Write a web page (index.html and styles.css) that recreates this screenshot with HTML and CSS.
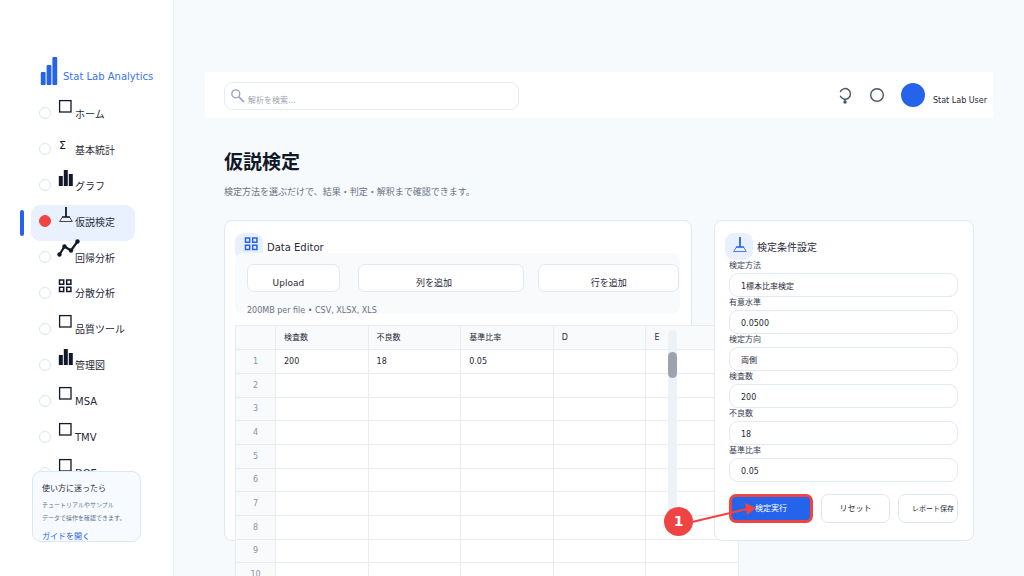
FILE: index.html
```html
<!DOCTYPE html>
<html lang="ja">
<head>
<meta charset="utf-8">
<meta name="viewport" content="width=device-width, initial-scale=1">
<title>Stat Lab Analytics</title>
<link rel="stylesheet" href="styles.css">
</head>
<body>
<svg class="sprite" aria-hidden="true">
  <symbol id="i-box" viewBox="0 0 16 16"><rect x="1.600" y="1.600" width="11.400" height="11.400" fill="none" stroke="currentColor" stroke-width="1.300"/></symbol>
  <symbol id="i-bars" viewBox="0 0 16 16"><path d="M0.800 6h4v10h-4zM5.800 0h4v16h-4zM10.800 4h4v12h-4z" fill="currentColor"/></symbol>
  <symbol id="i-test" viewBox="0 0 16 16"><path d="M8 0v10" stroke="currentColor" stroke-width="1.800" fill="none"/><path d="M4.500 10h7l2.800 4.500H1.600z" stroke="currentColor" stroke-width=".8" fill="none"/><path d="M4 10h8" stroke="currentColor" stroke-width="1.300"/></symbol>
  <symbol id="i-line" viewBox="0 0 24 18"><path d="M2.500 15.500 7.500 7.500 14 11.500 20.500 2.500" fill="none" stroke="currentColor" stroke-width="2.200"/><g fill="currentColor"><circle cx="2.500" cy="15.500" r="2.200"/><circle cx="7.500" cy="7.500" r="2.200"/><circle cx="14" cy="11.500" r="2.200"/><circle cx="20.500" cy="2.500" r="2.200"/></g></symbol>
  <symbol id="i-grid" viewBox="0 0 16 16"><path d="M1.500 1h4.200v4.200H1.500zM8.700 1h4.200v4.200H8.700zM1.500 8.200h4.200v4.200H1.500zM8.700 8.200h4.200v4.200H8.700z" fill="none" stroke="currentColor" stroke-width="1.500"/></symbol>
</svg>
<div class="app">
  <aside class="sidebar">
    <div class="brand">
      <svg class="brand-mark" viewBox="0 0 18 28" aria-hidden="true"><g fill="#2563eb"><rect x="0.800" y="15" width="4.800" height="13" rx="1"/><rect x="6.600" y="8" width="4.800" height="20" rx="1"/><rect x="12.400" y="0" width="4.800" height="28" rx="1"/></g></svg>
      <span>Stat Lab Analytics</span>
    </div>
    <nav class="nav">
      <label class="item"><input type="radio" name="nav"><svg class="ico"><use href="#i-box"/></svg><span>ホーム</span></label>
      <label class="item"><input type="radio" name="nav"><i class="ico sigma">Σ</i><span>基本統計</span></label>
      <label class="item"><input type="radio" name="nav"><svg class="ico bars"><use href="#i-bars"/></svg><span>グラフ</span></label>
      <label class="item active"><input type="radio" name="nav" checked><svg class="ico"><use href="#i-test"/></svg><span>仮説検定</span></label>
      <label class="item"><input type="radio" name="nav"><svg class="ico wide"><use href="#i-line"/></svg><span>回帰分析</span></label>
      <label class="item"><input type="radio" name="nav"><svg class="ico"><use href="#i-grid"/></svg><span>分散分析</span></label>
      <label class="item"><input type="radio" name="nav"><svg class="ico"><use href="#i-box"/></svg><span>品質ツール</span></label>
      <label class="item"><input type="radio" name="nav"><svg class="ico bars"><use href="#i-bars"/></svg><span>管理図</span></label>
      <label class="item"><input type="radio" name="nav"><svg class="ico"><use href="#i-box"/></svg><span>MSA</span></label>
      <label class="item"><input type="radio" name="nav"><svg class="ico"><use href="#i-box"/></svg><span>TMV</span></label>
      <label class="item"><input type="radio" name="nav"><svg class="ico"><use href="#i-box"/></svg><span>DOE</span></label>
    </nav>
    <section class="guide">
      <h2>使い方に迷ったら</h2>
      <p>チュートリアルやサンプル<br>データで操作を確認できます。</p>
      <a href="#guide">ガイドを開く</a>
    </section>
  </aside>

  <main class="main">
    <header class="topbar">
      <label class="search">
        <svg viewBox="0 0 14 14" aria-hidden="true"><circle cx="4.800" cy="4.800" r="4" fill="none" stroke="#94a3b8" stroke-width="1.300"/><path d="M7.800 7.800 13 13" stroke="#94a3b8" stroke-width="1.700"/></svg>
        <input type="search" placeholder="解析を検索..." aria-label="解析を検索">
      </label>
      <div class="tools">
        <button class="tool" aria-label="ヘルプ"><svg viewBox="0 0 16 18"><path d="M3.200 6A5.300 5.300 0 1 1 3.200 9.800" fill="none" stroke="#475569" stroke-width="1.400"/><path d="M8 13v2" stroke="#475569"/><circle cx="8" cy="16" r="1.700" fill="#475569"/></svg></button>
        <button class="tool" aria-label="通知"><svg viewBox="0 0 16 18"><circle cx="8" cy="9" r="6.300" fill="none" stroke="#475569" stroke-width="1.400"/></svg></button>
        <span class="avatar"></span>
        <span class="user">Stat Lab User</span>
      </div>
    </header>

    <div class="content">
      <h1>仮説検定</h1>
      <p class="lead">検定方法を選ぶだけで、結果・判定・解釈まで確認できます。</p>

      <div class="panels">
        <section class="panel editor">
          <div class="panel-head"><span class="tile"><svg><use href="#i-grid"/></svg></span><h2>Data Editor</h2></div>
          <div class="toolbar">
            <div class="toolbar-row">
              <button class="upload">Upload</button>
              <button class="column">列を追加</button>
              <button>行を追加</button>
            </div>
            <p>200MB per file • CSV, XLSX, XLS</p>
          </div>
          <div class="sheet">
            <table>
              <thead><tr><th class="num"></th><th>検査数</th><th>不良数</th><th>基準比率</th><th>D</th><th>E</th></tr></thead>
              <tbody>
                <tr><th class="num">1</th><td>200</td><td>18</td><td>0.05</td><td></td><td></td></tr>
                <tr><th class="num">2</th><td></td><td></td><td></td><td></td><td></td></tr>
                <tr><th class="num">3</th><td></td><td></td><td></td><td></td><td></td></tr>
                <tr><th class="num">4</th><td></td><td></td><td></td><td></td><td></td></tr>
                <tr><th class="num">5</th><td></td><td></td><td></td><td></td><td></td></tr>
                <tr><th class="num">6</th><td></td><td></td><td></td><td></td><td></td></tr>
                <tr><th class="num">7</th><td></td><td></td><td></td><td></td><td></td></tr>
                <tr><th class="num">8</th><td></td><td></td><td></td><td></td><td></td></tr>
                <tr><th class="num">9</th><td></td><td></td><td></td><td></td><td></td></tr>
                <tr><th class="num">10</th><td></td><td></td><td></td><td></td><td></td></tr>
              </tbody>
            </table>
            <div class="scrollbar"><span></span></div>
          </div>
        </section>

        <section class="panel settings">
          <div class="panel-head"><span class="tile"><svg><use href="#i-test"/></svg></span><h2>検定条件設定</h2></div>
          <form>
            <label for="method">検定方法</label>
            <select id="method"><option>1標本比率検定</option></select>
            <label for="alpha">有意水準</label>
            <input id="alpha" type="text" value="0.0500">
            <label for="side">検定方向</label>
            <select id="side"><option>両側</option></select>
            <label for="n">検査数</label>
            <input id="n" type="text" value="200">
            <label for="bad">不良数</label>
            <input id="bad" type="text" value="18">
            <label for="ratio">基準比率</label>
            <input id="ratio" type="text" value="0.05">
            <div class="actions">
              <button type="button" class="run">検定実行</button>
              <button type="button">リセット</button>
              <button type="button" class="report">レポート保存</button>
              <div class="callout">
                <svg viewBox="0 0 94 46" aria-hidden="true"><path d="M28 30 83 17" stroke="#ef4444" stroke-width="2"/><path d="M81 11 92 16 83 23z" fill="#ef4444"/></svg>
                <span>1</span>
              </div>
            </div>
          </form>
        </section>
      </div>
    </div>
  </main>
</div>
</body>
</html>
```
FILE: styles.css
```css
* { box-sizing: border-box; }

body {
  margin: 0;
  height: 100vh;
  overflow: hidden;
  background: #f6fafd;
  color: #1f2937;
  font-family: "DejaVu Sans", "Noto Sans CJK JP", sans-serif;
  font-size: 8px;
}

h1, h2, p { margin: 0; font-weight: 400; }
button, input, select { font: inherit; color: inherit; }
.sprite { position: absolute; width: 0; height: 0; }

.app { display: flex; height: 100vh; }

/* Sidebar */
.sidebar {
  position: relative;
  flex: none;
  width: 174px;
  padding: 57px 0 0 31px;
  background: #fff;
  border-right: 1px solid #e8eff6;
}
.brand { display: flex; align-items: flex-end; gap: 5px; padding-left: 9px; color: #3b73ee; font-size: 10px; white-space: nowrap; }
.brand-mark { width: 18px; height: 28px; }
.brand span { line-height: 16px; }

.nav { display: grid; grid-auto-rows: 1fr; width: 104px; height: 395px; margin-top: 12px; }
.item {
  position: relative;
  display: flex;
  align-items: center;
  padding-left: 8px;
  border-radius: 9px;
  font-size: 10px;
  white-space: nowrap;
}
.item input {
  appearance: none;
  flex: none;
  width: 12px;
  height: 12px;
  margin: 0 7px 3px 0;
  border: 1px solid #dbe5f0;
  border-radius: 50%;
}
.item span { line-height: 16px; }
.ico { flex: none; align-self: flex-start; width: 16px; height: 16px; margin-top: 2px; margin-right: 1px; color: #111827; }
.ico.bars { margin-top: 1px; }
.ico.wide { width: 24px; height: 18px; margin: -2px -6px 0 -1px; }
.sigma { margin-top: 5px; padding-left: 1px; font-size: 11px; font-style: normal; line-height: 16px; }
.item.active { background: #e9f0fe; }
.item.active input { background: #ef4444; border-color: #ef4444; }
.item.active::before {
  content: "";
  position: absolute;
  left: -11px;
  top: 5px;
  bottom: 5px;
  width: 4px;
  border-radius: 2px;
  background: #2563eb;
}

.guide {
  position: absolute;
  left: 32px;
  right: 32px;
  top: 471px;
  height: 71px;
  padding: 9px 9px 0;
  overflow: hidden;
  border: 1px solid #dbe7f3;
  border-radius: 9px;
  background: #f7fbff;
  white-space: nowrap;
}
.guide h2 { font-size: 8px; line-height: 16px; }
.guide p { margin-top: 1px; font-size: 6px; line-height: 13px; color: #64748b; }
.guide a { display: block; margin-top: 5px; line-height: 16px; color: #2563eb; text-decoration: none; }

/* Main area */
.main { flex: 1; min-width: 0; padding: 72px 31px 0; }
.topbar { display: flex; justify-content: space-between; align-items: center; height: 46px; padding: 0 6px 0 19px; background: #fff; }
.search {
  display: flex;
  align-items: center;
  width: 295px;
  height: 28px;
  margin-top: 2px;
  padding: 0 6px;
  border: 1px solid #e2eaf5;
  border-radius: 9px;
}
.search svg { flex: none; width: 14px; height: 14px; }
.search input { flex: 1; min-width: 0; padding: 8px 0 0 3px; border: 0; outline: 0; background: none; }
.search input::placeholder { color: #9ca3af; }
.tools { display: flex; align-items: center; gap: 16px; }
.tool { padding: 0; border: 0; background: none; line-height: 0; }
.tool svg { width: 16px; height: 18px; }
.avatar { width: 24px; height: 24px; border-radius: 50%; background: #2563eb; }
.user { margin-left: -8px; padding-top: 10px; white-space: nowrap; }

.content { padding: 29px 19px 0 19px; }
h1 { font-size: 19px; line-height: 30px; font-weight: 700; color: #111827; }
.lead { margin-top: 7px; font-size: 9px; line-height: 16px; color: #6b7280; }

.panels { display: grid; grid-template-columns: 9fr 5fr; gap: 22px; margin-top: 20px; }
.panel { display: flex; flex-direction: column; min-width: 0; border: 1px solid #dfe8f3; border-radius: 8px; background: #fff; }
.panel-head { display: flex; align-items: flex-start; gap: 4px; }
.panel-head h2 { padding-top: 6px; font-size: 10px; line-height: 17px; }
.tile { display: grid; place-items: center; width: 28px; height: 27px; padding: 0 0 4px 2px; border-radius: 9px; background: #e8f0fe; color: #2563eb; }
.tile svg { width: 16px; height: 16px; }

/* Data editor */
.editor { padding: 12px 10px 0; }
.editor .tile { padding: 0 0 3px 6px; }
.toolbar { position: relative; height: 61px; margin: -7px 1px 0 0; padding: 11px 1px 0 12px; border-radius: 8px; background: #f8fafc; }
.toolbar-row { display: grid; grid-template-columns: 97fr 167fr 141fr; gap: 14px; }
.toolbar button { height: 28px; padding: 9px 0 0; border: 1px solid #e2e8f3; border-radius: 7px; background: #fff; font-size: 9px; }
.toolbar .upload { margin-right: 4px; padding-right: 10px; }
.toolbar .column { padding-right: 14px; }
.toolbar p { margin-top: 11px; line-height: 16px; color: #6b7280; }

.sheet { position: relative; flex: 1 1 auto; height: 0; min-height: 0; margin-top: 11px; }
table { width: 113%; table-layout: fixed; border-collapse: collapse; background: #fff; }
thead tr { height: 24px; }
tbody { height: 237px; }
tbody tr { height: 24px; }
tbody tr:nth-child(3n) { height: 23px; }
th, td { padding: 1px 8px 0; border: 1px solid #e8ecf0; font-weight: 400; text-align: left; line-height: 12px; }
th { background: #f8fafc; }
.num { width: 40px; padding-top: 0; text-align: center; color: #8792a5; }
.scrollbar { position: absolute; right: 4px; top: 5px; width: 9px; height: 182px; border-radius: 5px; background: #edf2f7; padding-top: 22px; }
.scrollbar span { display: block; height: 26px; border-radius: 5px; background: #9ca3af; }

/* Test settings */
.settings { position: relative; padding: 12px 15px 17px 14px; }
.settings .panel-head { margin-left: -4px; }
form { display: grid; }
form label { height: 13px; line-height: 11px; color: #374151; }
form input, form select {
  appearance: none;
  width: 100%;
  height: 24px;
  padding: 2px 11px 0;
  border: 1px solid #e2e8f5;
  border-radius: 9px;
  background: #fff;
}
.actions { position: relative; display: grid; grid-template-columns: 84fr 69fr 60fr; gap: 8px; margin-top: 12px; }
.actions button { height: 29px; padding: 0 0 2px; border: 1px solid #dfe7f3; border-radius: 7px; background: #fff; white-space: nowrap; }
.actions .run { border: 3px solid #ef4444; background: #2563eb; color: #fff; }
.actions .report { padding-left: 10px; font-size: 7px; }

.callout { position: absolute; left: -65px; top: -2px; width: 94px; height: 46px; pointer-events: none; }
.callout svg { display: block; width: 94px; height: 46px; }
.callout span {
  position: absolute;
  left: 0;
  top: 15px;
  width: 29px;
  height: 29px;
  border-radius: 50%;
  background: #ef4444;
  color: #fff;
  font-size: 14px;
  font-weight: 700;
  line-height: 29px;
  text-align: center;
}
```
